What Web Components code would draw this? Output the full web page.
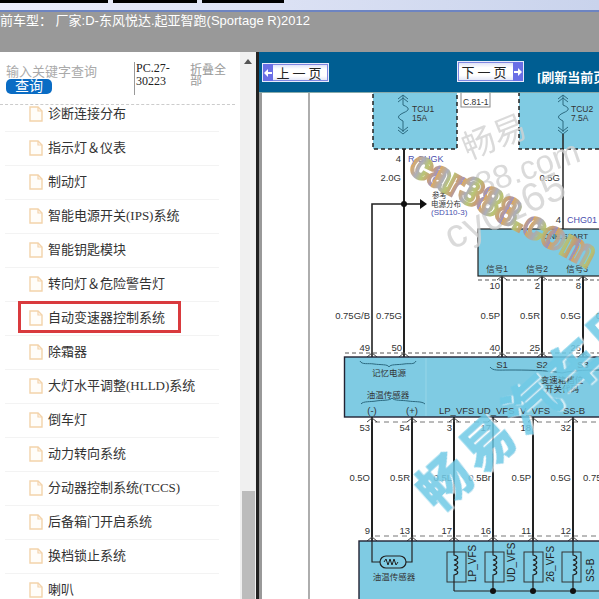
<!DOCTYPE html>
<html lang="zh">
<head>
<meta charset="utf-8">
<title>wiring</title>
<style>
  html, body { margin: 0; height: 599px; overflow: hidden; background: #fff; }
  body { font-family: "Liberation Sans", "Noto Sans CJK SC", sans-serif; }
  .page { display: flex; height: 547px; }
</style>
</head>
<body>
<top-bar>前车型： 厂家:D-东风悦达.起亚智跑(Sportage R)2012</top-bar>
<div class="page">
  <side-panel>
    <tree-item>诊断连接分布</tree-item>
    <tree-item>指示灯＆仪表</tree-item>
    <tree-item>制动灯</tree-item>
    <tree-item>智能电源开关(IPS)系统</tree-item>
    <tree-item>智能钥匙模块</tree-item>
    <tree-item>转向灯＆危险警告灯</tree-item>
    <tree-item marked>自动变速器控制系统</tree-item>
    <tree-item>除霜器</tree-item>
    <tree-item>大灯水平调整(HLLD)系统</tree-item>
    <tree-item>倒车灯</tree-item>
    <tree-item>动力转向系统</tree-item>
    <tree-item>分动器控制系统(TCCS)</tree-item>
    <tree-item>后备箱门开启系统</tree-item>
    <tree-item>换档锁止系统</tree-item>
    <tree-item>喇叭</tree-item>
  </side-panel>
  <diagram-view></diagram-view>
</div>

<script>
class TopBar extends HTMLElement {
  constructor() {
    super();
    this.attachShadow({ mode: "open" });
    this.shadowRoot.innerHTML = `
      <style>
        :host { display: block; height: 52px; }
        .strip {
          height: 10px;
          display: flex;
          gap: 5px;
          background: linear-gradient(90deg, #eceefb, #c9d3ec);
          border-bottom: 2px solid #6d84c2;
        }
        .strip i { display: block; height: 3px; background: #000; }
        .title {
          height: 40px;
          box-sizing: border-box;
          background: #999;
          color: #fff;
          font-size: 13px;
          line-height: 17px;
          white-space: pre;
        }
      </style>
      <div class="strip">
        <i style="width:108px"></i><i style="width:84px"></i><i style="width:82px"></i>
      </div>
      <div class="title"><slot></slot></div>
    `;
  }
}

class SidePanel extends HTMLElement {
  constructor() {
    super();
    this.attachShadow({ mode: "open" });
    this.shadowRoot.innerHTML = `
      <style>
        :host { display: flex; width: 256px; height: 547px; flex: none; background: #fff; }
        .main { width: 240px; display: flex; flex-direction: column; overflow: hidden; }
        .search {
          flex: none;
          height: 53px;
          box-sizing: border-box;
          margin-right: 5px;
          padding: 10px 0 0 6px;
          border-bottom: 1px dashed #ccc;
          display: flex;
        }
        .query { width: 128px; font-size: 13px; color: #aaa; padding-top: 3px; }
        .query b {
          display: block;
          width: 46px;
          height: 15px;
          border-radius: 5px;
          background: #0a6cc4;
          color: #fff;
          font-weight: normal;
          font-size: 14px;
          line-height: 15px;
          text-align: center;
        }
        .query span { display: block; line-height: 14px; }
        .code {
          width: 56px;
          height: 33px;
          box-sizing: border-box;
          border-left: 1px solid #999;
          padding-left: 1px;
          font: 12px/13px "Liberation Serif", serif;
          color: #222;
        }
        .fold { width: 40px; font-size: 12px; line-height: 11px; color: #999; padding-top: 3px; }
        .list { flex: 1; overflow: hidden; margin-top: -7px; }
        .bar { width: 16px; background: #f0f0f0; display: flex; flex-direction: column; align-items: center; }
        .arrow {
          width: 0; height: 0; margin-top: 7px;
          border: 4px solid transparent;
          border-top: 0;
          border-bottom: 5px solid #555;
        }
        .thumb { margin-top: auto; width: 13px; height: 108px; background: #bcbcbc; }
      </style>
      <div class="main">
        <div class="search">
          <div class="query"><span>输入关键字查询</span><b>查询</b></div>
          <div class="code">PC.27-30223</div>
          <div class="fold">折叠全部</div>
        </div>
        <div class="list"><slot></slot></div>
      </div>
      <div class="bar"><div class="arrow"></div><div class="thumb"></div></div>
    `;
  }
}

class TreeItem extends HTMLElement {
  constructor() {
    super();
    this.attachShadow({ mode: "open" });
    this.shadowRoot.innerHTML = `
      <style>
        :host {
          display: flex;
          align-items: center;
          gap: 5px;
          position: relative;
          height: 31px;
          margin: 0 21px 0 5px;
          padding: 0 0 2px 24px;
          border-bottom: 1px solid #f3f3f3;
          font: 13px/16px "Liberation Serif", "Noto Sans CJK SC", serif;
          color: #333;
          white-space: nowrap;
        }
        svg { flex: none; display: block; }
        .mark {
          display: none;
          position: absolute;
          left: 13px; top: -1px;
          width: 157px; height: 26px;
          border: 3px solid #d93a3e;
        }
        :host([marked]) .mark { display: block; }
      </style>
      <svg width="14" height="16" viewBox="0 0 14 16">
        <path d="M1 1h8l4 4v10H1z" fill="#fffdf9" stroke="#f3d3ab" stroke-width="1.4"/>
        <path d="M9 1v4h4" fill="none" stroke="#f3d3ab" stroke-width="1.2"/>
      </svg>
      <span><slot></slot></span>
      <div class="mark"></div>
    `;
  }
}

class PageButton extends HTMLElement {
  constructor() {
    super();
    this.attachShadow({ mode: "open" });
    this.shadowRoot.innerHTML = `
      <style>
        :host {
          display: flex;
          flex: none;
          align-items: center;
          box-sizing: border-box;
          width: 67px;
          background: linear-gradient(#d9ddf6, #fff 30%, #fff 70%, #dfe3f7);
          border: 1px solid #e8eafb;
          box-shadow: inset 0 0 0 1px #7f86e0;
          font: 13px "Liberation Serif", "Noto Sans CJK SC", serif;
          letter-spacing: 3px;
          color: #222;
        }
        :host([dir-next]) { flex-direction: row-reverse; }
        .tag {
          width: 10px;
          flex: none;
          align-self: stretch;
          background: #6a6fe6;
          display: flex;
          align-items: center;
          justify-content: center;
        }
        span { flex: 1; text-align: center; white-space: nowrap; }
      </style>
      <div class="tag">
        <svg width="8" height="8" viewBox="0 0 8 8">
          <path d="${this.hasAttribute("dir-next") ? "M0 3h4V0l4 4-4 4V5H0z" : "M8 3H4V0L0 4l4 4V5h4z"}" fill="#fff"/>
        </svg>
      </div>
      <span><slot></slot></span>
    `;
  }
}

class DiagramView extends HTMLElement {
  constructor() {
    super();
    this.attachShadow({ mode: "open" });
    const boxFill = "#7fcbe3";
    const wire = (x, y1, y2, w = 2) =>
      `<path d="M${x} ${y1}V${y2}" stroke="#222" stroke-width="${w}" fill="none"/>`;
    const pin = (x, y) =>
      `<path d="M${x - 5} ${y + 4}L${x} ${y}L${x + 5} ${y + 4}M${x} ${y}V${y + 4}" stroke="#444" stroke-width="1" fill="none"/>`;
    const label = (x, y, t, anchor = "end", size = 9.5) =>
      `<text x="${x}" y="${y}" text-anchor="${anchor}" font-size="${size}" fill="#333">${t}</text>`;
    const fuse = (x) => `
      <path d="M${x - 5} 99l5-4 5 4M${x - 5} 102l5-4 5 4M${x} 95v10c7 3 7 5 0 8c-6 3-6 5 0 8v11
               M${x - 5} 127l5 4 5-4M${x - 5} 130l5 4 5-4" fill="none" stroke="#2c6a80" stroke-width="1"/>`;
    const coil = (x, wx) => `
      <rect x="${x}" y="552" width="19" height="30" fill="none" stroke="#333"/>
      <path d="M${wx} 541v14c5 1 5 4 0 5c5 1 5 4 0 5c5 1 5 4 0 5c5 1 5 4 0 5v16" fill="none" stroke="#222" stroke-width="1.2"/>`;
    const upper = [[372, 49, "0.75G/B"], [404, 50, "0.75G"], [502, 40, "0.5P"], [542, 25, "0.5R"], [583, 26, "0.5G"]];
    const lower = [
      [372, 53, "0.5O", 9], [412, 54, "0.5R", 13], [454, 3, "0.5L", 17],
      [493, 17, "0.5Br", 16], [533, 18, "0.5P", 11], [573, 32, "0.5G", 12],
    ];
    const vert = (x, t) =>
      `<text transform="translate(${x} 582) rotate(-90)" font-size="10" fill="#222">${t}</text>`;

    this.shadowRoot.innerHTML = `
      <style>
        :host {
          display: flex;
          flex-direction: column;
          flex: 1;
          min-width: 0;
          height: 547px;
          box-sizing: border-box;
          border-left: 3px solid #222;
          background: #fff;
        }
        .head {
          flex: none;
          height: 41px;
          box-sizing: border-box;
          border-bottom: 1px solid #8aa;
          background: #005e92;
          display: flex;
          align-items: flex-start;
          overflow: hidden;
          white-space: nowrap;
        }
        page-button:first-child { margin: 11px 0 0 3px; height: 19px; }
        page-button + page-button { margin: 9px 0 0 128px; height: 21px; }
        .refresh {
          flex: none;
          margin: 17px 0 0 13px;
          color: #fff;
          font: bold 13px/17px "Liberation Serif", "Noto Sans CJK SC", serif;
        }
        .sheet { flex: 1; min-height: 0; overflow: hidden; border-left: 3px solid #999; }
        svg { display: block; margin-left: -3px; }
        text { font-family: "Liberation Sans", "Noto Sans CJK SC", sans-serif; }
      </style>
      <div class="head">
        <page-button>上一页</page-button>
        <page-button dir-next>下一页</page-button>
        <div class="refresh">[刷新当前页]</div>
      </div>
      <div class="sheet">
        <svg width="340" height="506" viewBox="259 93 340 506">
          <defs>
            <linearGradient id="rainbow" x1="0" x2="1" y1="0" y2="0" spreadMethod="repeat" gradientTransform="scale(.13 1)">
              <stop offset="0" stop-color="#d9a55a"/>
              <stop offset=".3" stop-color="#a9a9b6"/>
              <stop offset=".55" stop-color="#b7c36e"/>
              <stop offset=".8" stop-color="#c79a72"/>
              <stop offset="1" stop-color="#9a8fc0"/>
            </linearGradient>
            <filter id="rim" x="-10%" y="-10%" width="120%" height="120%">
              <feDropShadow dx="1.500" dy="1.500" stdDeviation="0" flood-color="#fff" flood-opacity=".9"/>
            </filter>
          </defs>
          <path d="M309 93V599" stroke="#777" stroke-width="1.2"/>

          <rect x="373" y="88" width="84" height="61" fill="${boxFill}" stroke="#222" stroke-width="1.5" stroke-dasharray="4 3"/>
          <rect x="519" y="88" width="90" height="61" fill="${boxFill}" stroke="#222" stroke-width="1.5" stroke-dasharray="4 3"/>
          ${fuse(403)}${fuse(563)}
          ${label(412, 112, "TCU1", "start", 8.5)}${label(412, 121, "15A", "start", 8.5)}
          ${label(571, 112, "TCU2", "start", 8.5)}${label(571, 121, "7.5A", "start", 8.5)}
          <rect x="461" y="90" width="29" height="17" fill="#fff" stroke="#888"/>
          ${label(463, 105, "C.81-1", "start", 8.5)}

          ${wire(404, 149, 357)}${wire(563, 134, 229, 1.5)}
          ${label(401, 162, "4")}
          ${label(408, 162, "R-CHGK", "start", 9).replace("#333", "#4a4fae")}
          ${label(401, 181, "2.0G")}${label(560, 181, "0.5G")}
          <path d="M404 204H372V357" fill="none" stroke="#222" stroke-width="1.6"/>
          <path d="M404 204H420" stroke="#222" stroke-width="1.6"/>
          <circle cx="404" cy="204" r="3" fill="#111"/>
          <path d="M420 199l7 5-7 5z" fill="#111"/>
          ${label(432, 198, "参考", "start", 7.5)}${label(431, 207, "电源分布", "start", 7.5)}
          ${label(431, 215, "(SD110-3)", "start", 8).replace("#333", "#4a4fae")}

          <rect x="478" y="229" width="130" height="47" fill="${boxFill}" stroke="#222" stroke-width="1.2"/>
          ${label(561, 223, "4")}${label(567, 223, "CHG01", "start", 9).replace("#333", "#4a4fae")}
          ${label(543, 239, "ONE.START", "start", 8)}
          ${label(497, 272, "信号1", "middle", 8.5)}${label(537, 272, "信号2", "middle", 8.5)}${label(577, 272, "信号3", "middle", 8.5)}
          <path d="M478 280H599" stroke="#555" stroke-dasharray="4 3"/>
          ${[[502, 10], [542, 2], [583, 8]].map(([x, n]) => wire(x, 276, 357) + label(x - 2, 289, n) + pin(x, 276)).join("")}
          ${label(596, 319, "0.", "start")}

          ${upper.map(([x, n, t]) => label(x - 2, 351, n) + label(x - 2, 319, t) + pin(x, 353)).join("")}
          <path d="M345 353H599" stroke="#555" stroke-dasharray="4 3"/>

          <rect x="344.500" y="357" width="270" height="60" fill="${boxFill}" stroke="#223" stroke-width="1.4"/>
          <path d="M426 358V416" stroke="#98d6e8"/>
          <path d="M360 361c2 4 8 2 14 3s14 0 15 3c1-3 9-2 15-3s10 1 12-3" fill="none" stroke="#2c6a80"/>
          ${label(389, 376, "记忆电源", "middle", 8.5)}
          ${label(388, 398, "油温传感器", "middle", 8.5)}
          <path d="M361 404c2-3 10-2 15-3s14 0 16-3c2 3 10 2 16 3s14 0 17 3" fill="none" stroke="#2c6a80"/>
          ${label(502, 368, "S1", "middle")}${label(542, 368, "S2", "middle")}${label(583, 368, "S3", "middle")}
          <path d="M490 367c3 4 8 3 20 3s38 0 52 3c12-3 30-3 40-3" fill="none" stroke="#2c6a80"/>
          ${label(562, 383, "变速箱档位", "middle", 8.5)}${label(562, 392, "开关代码", "middle", 8.5)}
          ${label(372, 414, "(-)", "middle")}${label(412, 414, "(+)", "middle")}
          ${label(439, 414, "LP_VFS", "start")}${label(477, 414, "UD_VFS", "start")}
          ${label(520, 414, "V_VFS", "start")}${label(563, 414, "SS-B", "start")}

          <path d="M375 422H599M375 536H599" stroke="#777" stroke-dasharray="5 4"/>
          ${lower.map(([x, n, t, b]) =>
            wire(x, 417, 541) + label(x - 2, 431, n) + label(x - 2, 481, t) + label(x - 2, 534, b) +
            pin(x, 418) + pin(x, 537)).join("")}
          ${label(583, 481, "0.75", "start")}

          <rect x="359" y="541" width="260" height="70" fill="${boxFill}" stroke="#223" stroke-width="1.4"/>
          <path d="M372 541V562H380M412 541V562H406" fill="none" stroke="#222" stroke-width="1.2"/>
          <rect x="380" y="556" width="26" height="12" rx="6" fill="${boxFill}" stroke="#222" stroke-width="1.2"/>
          <path d="M384 562l2-3 2 6 2-6 2 6 2-6 2 6 2-3" fill="none" stroke="#222"/>
          ${label(394, 580, "油温传感器", "middle", 8.5)}
          ${coil(447, 454)}${coil(485, 493)}${coil(524, 533)}${coil(562, 573)}
          ${vert(476, "LP_VFS")}${vert(515, "UD_VFS")}${vert(554, "26_VFS")}${vert(594, "SS-B")}
          <path d="M454 591H599" stroke="#222" stroke-width="1.2"/>
          <circle cx="493" cy="591" r="3" fill="#111"/><circle cx="533" cy="591" r="3" fill="#111"/><circle cx="573" cy="591" r="3" fill="#111"/>

          <g fill="#d2d2d2" opacity=".8">
            <text transform="translate(468 160) rotate(-22)" font-size="33">畅易</text>
            <text transform="translate(480 196) rotate(-19)" font-size="33">88.com</text>
            <text transform="translate(452 250) rotate(-25)" font-size="40">cy0165</text>
          </g>
          <text transform="translate(408 172) rotate(28)" font-size="37" font-weight="bold"
            fill="none" stroke="url(#rainbow)" stroke-width="4" opacity=".95">car388.com</text>
          <text transform="translate(438 514) rotate(-42)" font-size="52" font-weight="bold"
            fill="#6fcae6" stroke="#6fcae6" stroke-width="1.5" opacity=".85" letter-spacing="6" filter="url(#rim)">畅易汽车网</text>
        </svg>
      </div>
    `;
  }
}

customElements.define("top-bar", TopBar);
customElements.define("side-panel", SidePanel);
customElements.define("tree-item", TreeItem);
customElements.define("page-button", PageButton);
customElements.define("diagram-view", DiagramView);
</script>
</body>
</html>
